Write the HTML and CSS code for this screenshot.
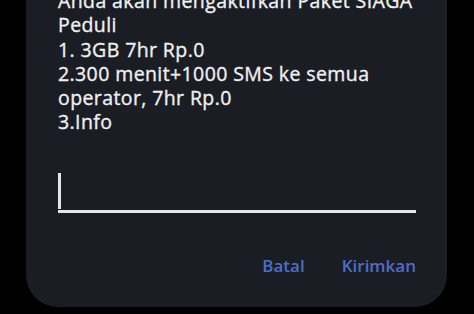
FILE: index.html
```html
<!DOCTYPE html>
<html>
<head>
<meta charset="utf-8">
<link rel="stylesheet" href="styles.css">
</head>
<body>
<div class="card">
  <div class="msg">
    <div>Anda akan mengaktifkan Paket SIAGA</div>
    <div>Peduli</div>
    <div>1. 3GB 7hr Rp.0</div>
    <div>2.300 menit+1000 SMS ke semua</div>
    <div>operator, 7hr Rp.0</div>
    <div>3.Info</div>
  </div>
  <div class="field"><span class="cursor"></span></div>
  <div class="actions">
    <span class="btn">Batal</span>
    <span class="btn">Kirimkan</span>
  </div>
</div>
</body>
</html>
```
FILE: styles.css
```css
html, body {
  margin: 0;
  padding: 0;
  background: #000;
  height: 314px;
  overflow: hidden;
}
.card {
  margin: 0 27px 0 26px;
  background: #1b1d24;
  border-radius: 0 0 32px 32px;
  padding: 0 31px 0 32px;
  height: 307px;
  box-sizing: border-box;
  display: flex;
  flex-direction: column;
  font-family: "Open Sans", Roboto, sans-serif;
}
.msg {
  margin-top: -11px;
  color: #f0f0f0;
  font-size: 19.5px;
  font-weight: 500;
  line-height: 24.3px;
  letter-spacing: 0.4px;
  -webkit-text-stroke: 0.35px #f0f0f0;
}
.field {
  margin-top: 37px;
  height: 38px;
  border-bottom: 3px solid #e6e6e6;
  display: flex;
}
.cursor {
  width: 3px;
  height: 36px;
  background: #e6e6e6;
  margin-top: 1px;
}
.actions {
  margin-top: 43px;
  display: flex;
  justify-content: flex-end;
  gap: 37px;
}
.btn {
  color: #4b6ecd;
  font-size: 17px;
  font-weight: 600;
  line-height: 20px;
}
```
